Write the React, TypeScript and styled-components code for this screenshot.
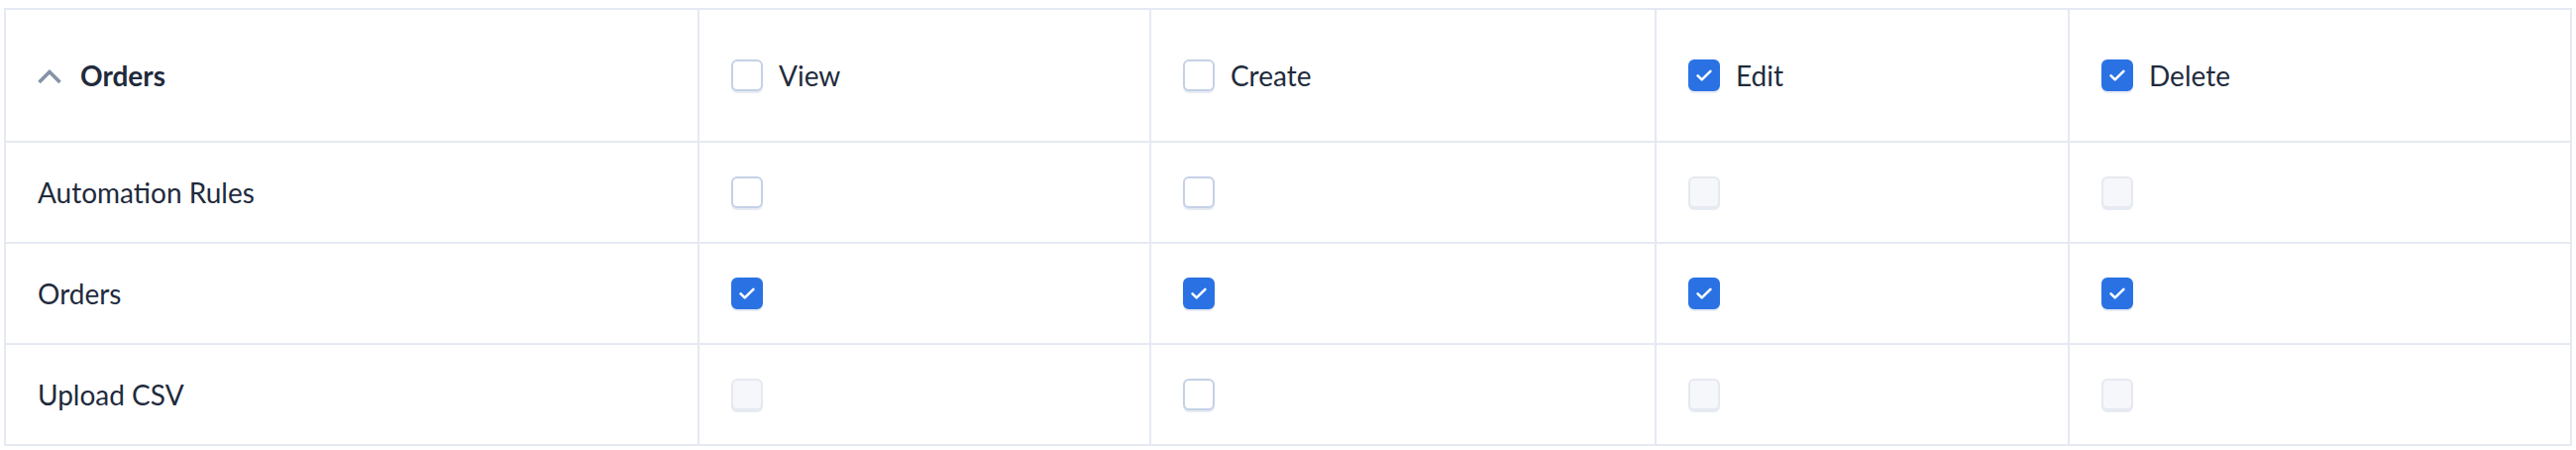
import { Fragment } from "react";
import styled, { createGlobalStyle } from "styled-components";

type State = "off" | "on" | "disabled";

const columns = ["View", "Create", "Edit", "Delete"];

const headerState: State[] = ["off", "off", "on", "on"];

const rows: { name: string; perms: State[] }[] = [
  { name: "Automation Rules", perms: ["off", "off", "disabled", "disabled"] },
  { name: "Orders", perms: ["on", "on", "on", "on"] },
  { name: "Upload CSV", perms: ["disabled", "off", "disabled", "disabled"] },
];

function Checkbox({ state }: { state: State }) {
  return (
    <Box $state={state}>
      {state === "on" && (
        <svg width="32" height="32" viewBox="0 0 32 32" fill="none">
          <path
            d="M9.6 16.4l4.1 4L22.4 11.8"
            stroke="#fff"
            strokeWidth="2.6"
            strokeLinecap="round"
            strokeLinejoin="round"
          />
        </svg>
      )}
    </Box>
  );
}

export default function App() {
  return (
    <>
      <GlobalStyle />
      <Page>
        <Table>
          <Cell>
            <GroupTitle>
              <svg width="24" height="24" viewBox="0 0 24 24" fill="none">
                <path
                  d="M1.5 19L12 8.5 22.5 19"
                  stroke="#8593a8"
                  strokeWidth="3.6"
                />
              </svg>
              <GroupLabel>Orders</GroupLabel>
            </GroupTitle>
          </Cell>
          {columns.map((c, i) => (
            <Cell key={c}>
              <Option>
                <Checkbox state={headerState[i]} />
                <OptionLabel>{c}</OptionLabel>
              </Option>
            </Cell>
          ))}

          {rows.map((r) => (
            <Fragment key={r.name}>
              <Cell>
                <RowLabel>{r.name}</RowLabel>
              </Cell>
              {r.perms.map((p, i) => (
                <Cell key={i}>
                  <Checkbox state={p} />
                </Cell>
              ))}
            </Fragment>
          ))}
        </Table>
      </Page>
    </>
  );
}

const GlobalStyle = createGlobalStyle`
  html, body {
    margin: 0;
    padding: 0;
    background: #ffffff;
  }

  body {
    font-family: Lato, "Noto Sans", sans-serif;
    color: #1f2b3d;
  }
`;

const Page = styled.div`
  padding: 8px 4px 4px 4px;
`;

const Table = styled.div`
  display: grid;
  grid-template-columns: 698px 454px 508px 415px 1fr;
  grid-template-rows: 132px 100px 100px 100px;
  gap: 2px;

  background: #e5e9f2;
  border: 2px solid #e5e9f2;
`;

const Cell = styled.div`
  background: #ffffff;

  display: flex;
  align-items: center;

  padding: 0 32px;
`;

const GroupTitle = styled.div`
  display: flex;
  align-items: center;
  gap: 19px;
`;

const GroupLabel = styled.span`
  font-size: 28px;
  font-weight: 700;
  color: #1f2a3c;
`;

const Option = styled.label`
  display: flex;
  align-items: center;
  gap: 16px;
`;

const OptionLabel = styled.span`
  font-size: 28px;
  font-weight: 400;
  color: #1f2b3d;
`;

const RowLabel = styled.span`
  font-size: 28px;
  font-weight: 400;
  color: #1f2b3d;
`;

const Box = styled.span<{ $state: State }>`
  position: relative;
  flex: none;

  width: 32px;
  height: 32px;

  box-sizing: border-box;

  border-radius: 6px;

  display: flex;
  align-items: center;
  justify-content: center;

  border: 2px solid
    ${(p) =>
      p.$state === "on"
        ? "#2a72e4"
        : p.$state === "disabled"
        ? "#e6e9f0"
        : "#c4d1e6"};

  background: ${(p) =>
    p.$state === "on"
      ? "#2a72e4"
      : p.$state === "disabled"
      ? "#f6f7fa"
      : "#ffffff"};

  box-shadow: 0 2px 0 #e6ebf3;

  svg {
    position: absolute;
    left: -2px;
    top: -2px;
  }
`;
